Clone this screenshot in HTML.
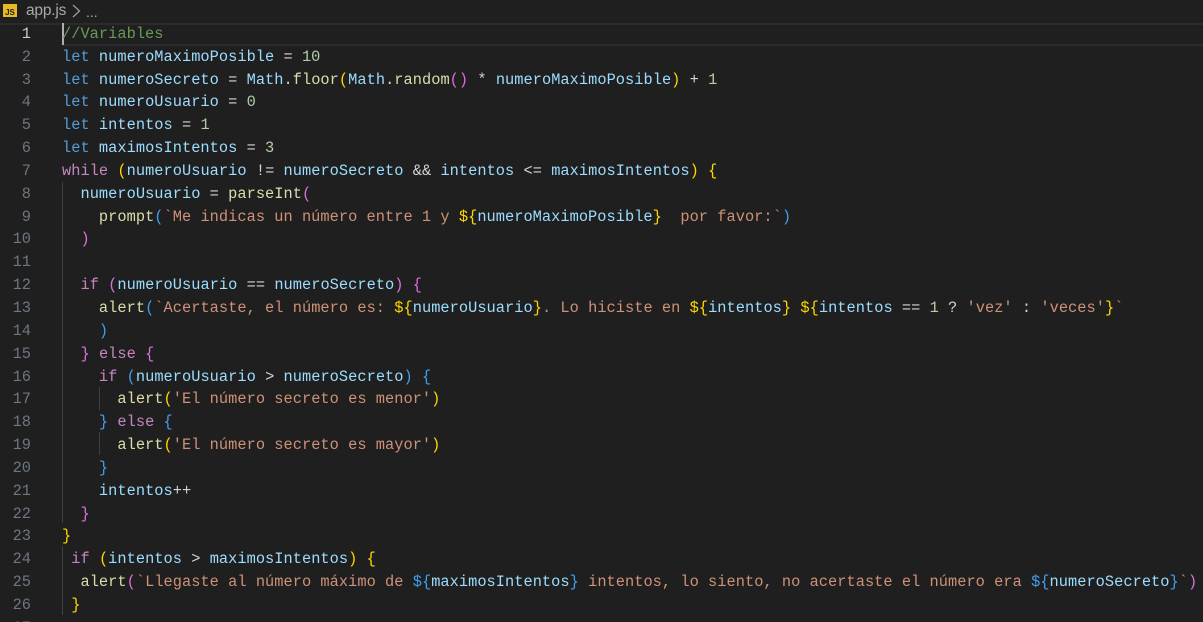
<!DOCTYPE html>
<html lang="es">
<head>
<meta charset="utf-8">
<title>app.js</title>
<style>
html,body{margin:0;padding:0;background:#1f1f1f;}
#root{position:relative;width:1203px;height:622px;overflow:hidden;background:#1f1f1f;font-family:"Liberation Mono",monospace;font-size:15.33px;}
#code{position:absolute;left:0;top:1px;width:1203px;height:621px;filter:blur(.3px);}
.l{position:absolute;left:62px;height:23px;line-height:23px;white-space:pre;color:#d4d4d4;letter-spacing:.03px;}
.n{position:absolute;left:0;width:31px;height:23px;line-height:23px;text-align:right;color:#6e7681;font-size:15.33px;}
.g{position:absolute;width:1px;background:#3f3f3f;}
.k{color:#569cd6}.v{color:#9cdcfe}.c{color:#c586c0}.f{color:#dcdcaa}.s{color:#ce9178}.m{color:#6a9955}.d{color:#b5cea8}
.y{color:#ffd700}.p{color:#da70d6}.b{color:#3f9fef}
</style>
</head>
<body>
<div id="root">
<div style="position:absolute;left:0;top:23px;width:1203px;height:2px;background:#2b2b2b"></div>
<div style="position:absolute;left:62px;top:44px;width:1141px;height:2px;background:#2b2b2b"></div>
<div style="position:absolute;left:3px;top:4px;width:14px;height:13px;background:#e8b923;color:#1f1f1f;font:bold 8px/17px 'Liberation Sans',sans-serif;text-align:center">JS</div>
<div style="position:absolute;left:26px;top:1px;font:15.5px/20px 'Liberation Sans',sans-serif;color:#a9a9a9;letter-spacing:-.2px">app.js</div>
<svg style="position:absolute;left:71px;top:3px" width="11" height="16" viewBox="0 0 11 16"><path d="M2 2l6.500 6-6.500 6" fill="none" stroke="#a0a0a0" stroke-width="1.200"/></svg>
<div style="position:absolute;left:86px;top:2px;font:14px/20px 'Liberation Sans',sans-serif;color:#a9a9a9">...</div>
<div style="position:absolute;left:62px;top:23px;width:2px;height:22px;background:#aeafad"></div>
<div class="g" style="left:62px;top:182px;height:341px"></div>
<div class="g" style="left:62px;top:546px;height:69px"></div>
<div class="g" style="left:99px;top:387px;height:23px"></div>
<div class="g" style="left:99px;top:432px;height:23px"></div>

<div id="code">
<div class="n" style="top:22px;color:#cccccc">1</div>
<div class="n" style="top:45px">2</div>
<div class="n" style="top:68px">3</div>
<div class="n" style="top:90px">4</div>
<div class="n" style="top:113px">5</div>
<div class="n" style="top:136px">6</div>
<div class="n" style="top:159px">7</div>
<div class="n" style="top:182px">8</div>
<div class="n" style="top:205px">9</div>
<div class="n" style="top:227px">10</div>
<div class="n" style="top:250px">11</div>
<div class="n" style="top:273px">12</div>
<div class="n" style="top:296px">13</div>
<div class="n" style="top:319px">14</div>
<div class="n" style="top:342px">15</div>
<div class="n" style="top:365px">16</div>
<div class="n" style="top:387px">17</div>
<div class="n" style="top:410px">18</div>
<div class="n" style="top:433px">19</div>
<div class="n" style="top:456px">20</div>
<div class="n" style="top:479px">21</div>
<div class="n" style="top:502px">22</div>
<div class="n" style="top:524px">23</div>
<div class="n" style="top:547px">24</div>
<div class="n" style="top:570px">25</div>
<div class="n" style="top:593px">26</div>
<div class="n" style="top:616px">27</div>

<div class="l" style="top:22px"><span class="m">//Variables</span></div>
<div class="l" style="top:45px"><span class="k">let</span> <span class="v">numeroMaximoPosible</span> = <span class="d">10</span></div>
<div class="l" style="top:68px"><span class="k">let</span> <span class="v">numeroSecreto</span> = <span class="v">Math</span>.<span class="f">floor</span><span class="y">(</span><span class="v">Math</span>.<span class="f">random</span><span class="p">()</span> * <span class="v">numeroMaximoPosible</span><span class="y">)</span> + <span class="d">1</span></div>
<div class="l" style="top:90px"><span class="k">let</span> <span class="v">numeroUsuario</span> = <span class="d">0</span></div>
<div class="l" style="top:113px"><span class="k">let</span> <span class="v">intentos</span> = <span class="d">1</span></div>
<div class="l" style="top:136px"><span class="k">let</span> <span class="v">maximosIntentos</span> = <span class="d">3</span></div>
<div class="l" style="top:159px"><span class="c">while</span> <span class="y">(</span><span class="v">numeroUsuario</span> != <span class="v">numeroSecreto</span> &amp;&amp; <span class="v">intentos</span> &lt;= <span class="v">maximosIntentos</span><span class="y">)</span> <span class="y">{</span></div>
<div class="l" style="top:182px">  <span class="v">numeroUsuario</span> = <span class="f">parseInt</span><span class="p">(</span></div>
<div class="l" style="top:205px">    <span class="f">prompt</span><span class="b">(</span><span class="s">`Me indicas un número entre 1 y </span><span class="y">${</span><span class="v">numeroMaximoPosible</span><span class="y">}</span><span class="s">  por favor:`</span><span class="b">)</span></div>
<div class="l" style="top:227px">  <span class="p">)</span></div>
<div class="l" style="top:273px">  <span class="c">if</span> <span class="p">(</span><span class="v">numeroUsuario</span> == <span class="v">numeroSecreto</span><span class="p">)</span> <span class="p">{</span></div>
<div class="l" style="top:296px">    <span class="f">alert</span><span class="b">(</span><span class="s">`Acertaste, el número es: </span><span class="y">${</span><span class="v">numeroUsuario</span><span class="y">}</span><span class="s">. Lo hiciste en </span><span class="y">${</span><span class="v">intentos</span><span class="y">}</span><span class="s"> </span><span class="y">${</span><span class="v">intentos</span> == <span class="d">1</span> ? <span class="s">'vez'</span> : <span class="s">'veces'</span><span class="y">}</span><span class="s">`</span></div>
<div class="l" style="top:319px">    <span class="b">)</span></div>
<div class="l" style="top:342px">  <span class="p">}</span> <span class="c">else</span> <span class="p">{</span></div>
<div class="l" style="top:365px">    <span class="c">if</span> <span class="b">(</span><span class="v">numeroUsuario</span> &gt; <span class="v">numeroSecreto</span><span class="b">)</span> <span class="b">{</span></div>
<div class="l" style="top:387px">      <span class="f">alert</span><span class="y">(</span><span class="s">'El número secreto es menor'</span><span class="y">)</span></div>
<div class="l" style="top:410px">    <span class="b">}</span> <span class="c">else</span> <span class="b">{</span></div>
<div class="l" style="top:433px">      <span class="f">alert</span><span class="y">(</span><span class="s">'El número secreto es mayor'</span><span class="y">)</span></div>
<div class="l" style="top:456px">    <span class="b">}</span></div>
<div class="l" style="top:479px">    <span class="v">intentos</span>++</div>
<div class="l" style="top:502px">  <span class="p">}</span></div>
<div class="l" style="top:524px"><span class="y">}</span></div>
<div class="l" style="top:547px"> <span class="c">if</span> <span class="y">(</span><span class="v">intentos</span> &gt; <span class="v">maximosIntentos</span><span class="y">)</span> <span class="y">{</span></div>
<div class="l" style="top:570px">  <span class="f">alert</span><span class="p">(</span><span class="s">`Llegaste al número máximo de </span><span class="b">${</span><span class="v">maximosIntentos</span><span class="b">}</span><span class="s"> intentos, lo siento, no acertaste el número era </span><span class="b">${</span><span class="v">numeroSecreto</span><span class="b">}</span><span class="s">`</span><span class="p">)</span></div>
<div class="l" style="top:593px"> <span class="y">}</span></div>
</div>
</div>
</body>
</html>
